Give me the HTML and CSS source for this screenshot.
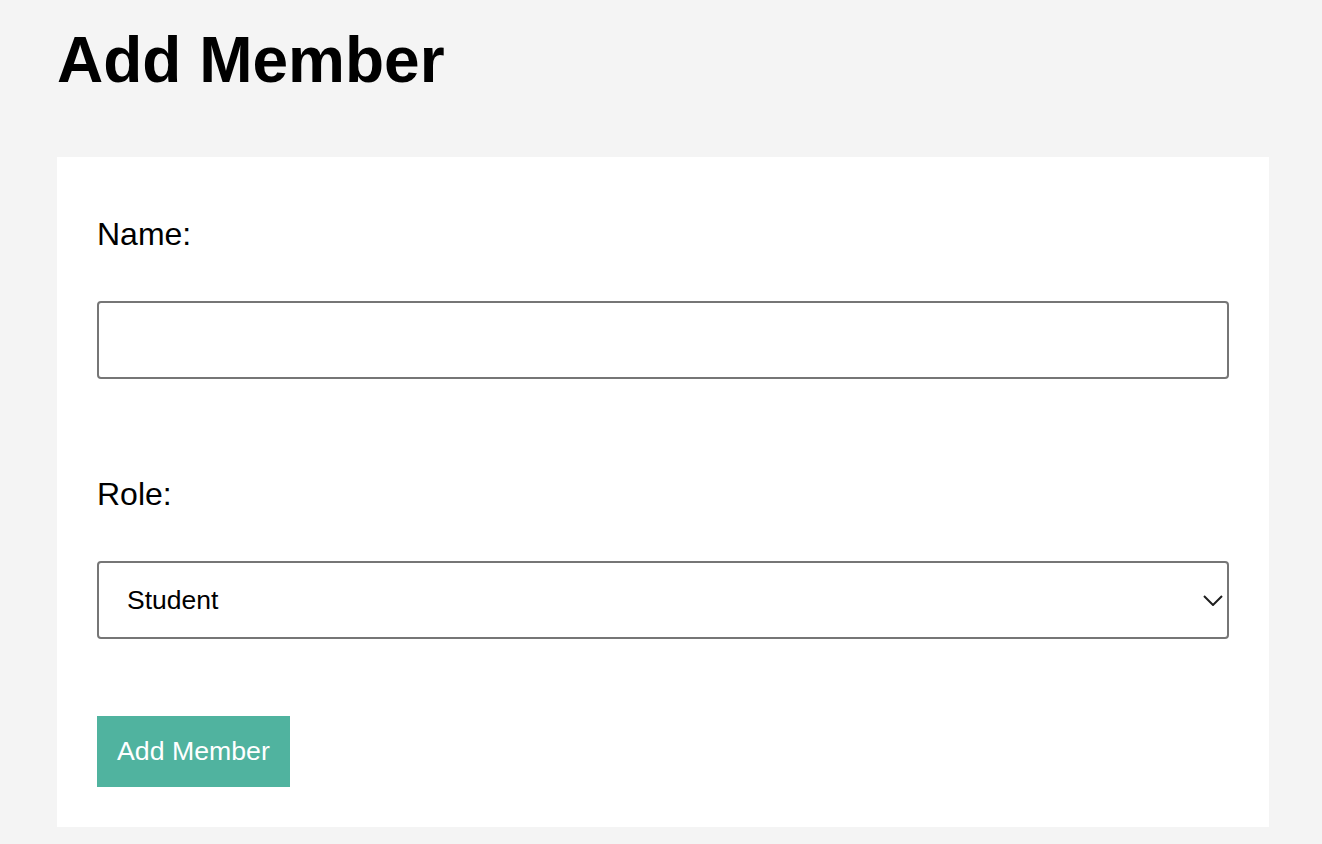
FILE: index.html
```html
<!DOCTYPE html>
<html lang="en">
<head>
    <meta charset="UTF-8">
    <meta name="viewport" content="width=device-width, initial-scale=1.0">
    <title>Add Member</title>
    <link rel="stylesheet" href="styles.css">
</head>
<body>
    <h1>Add Member</h1>

    <form id="addMemberForm" class="member-form">
        <label for="memberName">Name:</label>
        <input type="text" id="memberName" required>

        <label for="memberRole" class="role-label">Role:</label>
        <div class="select-wrap">
            <select id="memberRole">
                <option value="Student">Student</option>
                <option value="Teacher">Teacher</option>
                <option value="Admin">Admin</option>
            </select>
            <svg class="select-arrow" width="20" height="11" viewBox="0 0 20 11">
                <path d="M1 1 L10 10 L19 1" fill="none" stroke="#1f1f1f" stroke-width="2"/>
            </svg>
        </div>

        <button type="submit">Add Member</button>
    </form>
</body>
</html>
```

FILE: styles.css
```css
body {
    font-family: "Liberation Sans", Arial, sans-serif;
    background-color: #f4f4f4;
    margin: 0;
    padding: 0 53px 0 57px;
}
h1 {
    font-size: 64px;
    line-height: 74px;
    margin: 23px 0 60px;
}
.member-form {
    display: flex;
    flex-direction: column;
    align-items: flex-start;
    background-color: #fff;
    padding: 59px 40px 40px;
}
label {
    font-size: 32px;
    line-height: 37px;
    margin-bottom: 48px;
}
.role-label {
    margin-top: 97px;
}
input, select {
    box-sizing: border-box;
    width: 100%;
    height: 78px;
    border: 2px solid #767676;
    border-radius: 4px;
    background-color: #fff;
    font-family: inherit;
    font-size: 26.5px;
    color: #000;
}
select {
    appearance: none;
    -webkit-appearance: none;
    padding: 0 60px 0 28px;
}
.select-wrap {
    position: relative;
    width: 100%;
}
.select-arrow {
    position: absolute;
    right: 6px;
    top: 34px;
    pointer-events: none;
}
button {
    margin-top: 77px;
    height: 71px;
    padding: 0 20px;
    background-color: #50b39f;
    color: #fff;
    border: none;
    font-family: inherit;
    font-size: 26.7px;
    cursor: pointer;
}
button:hover {
    background-color: #46a592;
}
```
